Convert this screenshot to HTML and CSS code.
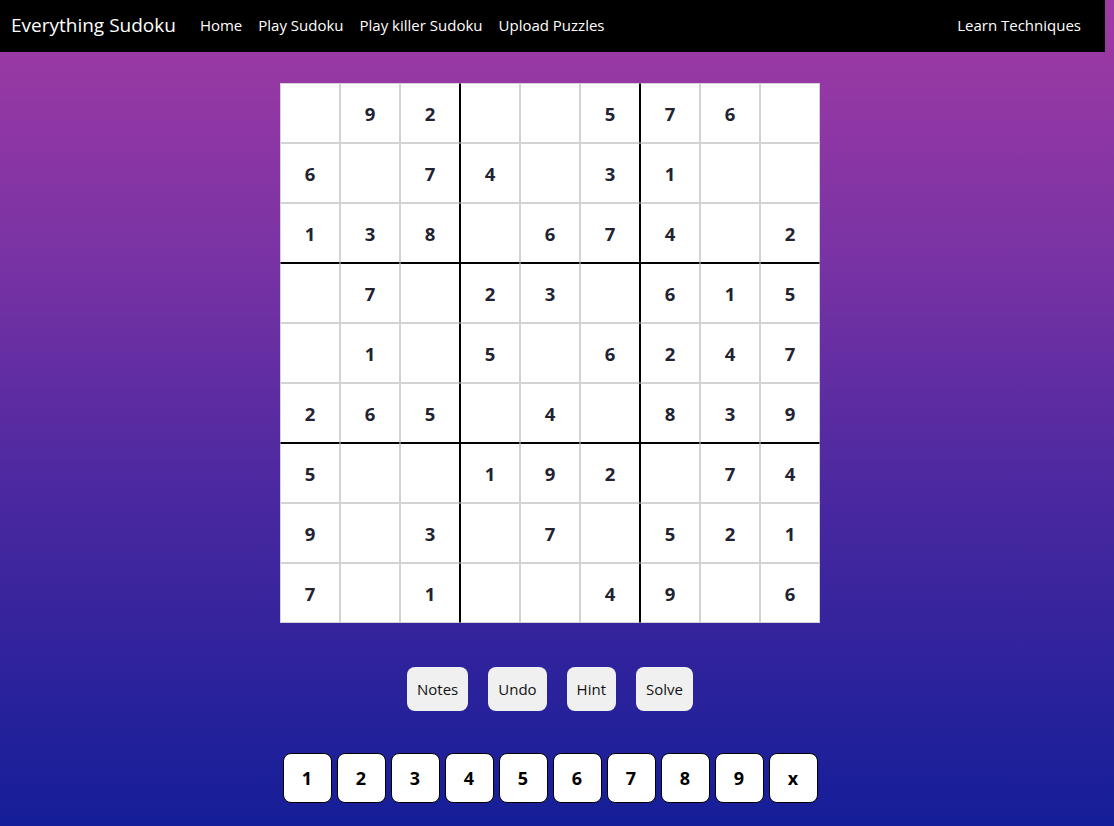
FILE: index.html
```html
<!DOCTYPE html>
<html>
<head>
<meta charset="utf-8">
<title>Everything Sudoku</title>
<link rel="stylesheet" href="styles.css">
</head>
<body>
<nav class="navbar">
  <a class="brand" href="#">Everything Sudoku</a>
  <ul class="nav-links">
    <li><a href="#">Home</a></li>
    <li><a href="#">Play Sudoku</a></li>
    <li><a href="#">Play killer Sudoku</a></li>
    <li><a href="#">Upload Puzzles</a></li>
  </ul>
  <a class="nav-right" href="#">Learn Techniques</a>
</nav>
<main class="main">
  <div class="board" id="board"></div>
  <div class="controls">
    <button class="ctrl">Notes</button>
    <button class="ctrl">Undo</button>
    <button class="ctrl">Hint</button>
    <button class="ctrl">Solve</button>
  </div>
  <div class="numpad">
    <button class="num">1</button>
    <button class="num">2</button>
    <button class="num">3</button>
    <button class="num">4</button>
    <button class="num">5</button>
    <button class="num">6</button>
    <button class="num">7</button>
    <button class="num">8</button>
    <button class="num">9</button>
    <button class="num">x</button>
  </div>
</main>
<script>
const rows = [
  " 92  576 ",
  "6 74 31  ",
  "138 674 2",
  " 7 23 615",
  " 1 5 6247",
  "265 4 839",
  "5  192 74",
  "9 3 7 521",
  "7 1  49 6"
];
const board = document.getElementById('board');
rows.forEach((row, r) => {
  for (let c = 0; c < 9; c++) {
    const d = document.createElement('div');
    d.className = 'cell';
    if (c === 2 || c === 5) d.classList.add('br');
    if (c === 3 || c === 6) d.classList.add('bl');
    if (r === 2 || r === 5) d.classList.add('bb');
    if (r === 3 || r === 6) d.classList.add('bt');
    const ch = row[c];
    d.textContent = ch === ' ' ? '' : ch;
    board.appendChild(d);
  }
});
</script>
</body>
</html>
```
FILE: styles.css
```css
* { box-sizing: border-box; }
html, body {
  margin: 0;
  padding: 0;
}
body {
  min-height: 826px;
  background: linear-gradient(to bottom, #a13aa4 0%, #7b33a4 30%, #4a28a0 60%, #141e98 100%);
  font-family: "Open Sans", "Noto Sans", sans-serif;
  overflow: hidden;
}
.navbar {
  width: 1105px;
  height: 52px;
  background: #000;
  display: flex;
  align-items: center;
  padding: 0 24px 3px 11px;
}
.navbar a {
  color: #fff;
  text-decoration: none;
}
.brand {
  font-size: 19px;
  margin-right: 24px;
}
.nav-links {
  list-style: none;
  display: flex;
  gap: 16px;
  margin: 0;
  padding: 0;
  font-size: 15px;
}
.nav-right {
  margin-left: auto;
  font-size: 15px;
}
.main {
  width: 1100px;
  display: flex;
  flex-direction: column;
  align-items: center;
  padding-top: 31px;
}
.board {
  display: grid;
  grid-template-columns: repeat(9, 60px);
  grid-template-rows: repeat(9, 60px);
  background: #fff;
}
.cell {
  border: 1px solid #d3d3d3;
  background: #fff;
  display: flex;
  align-items: center;
  justify-content: center;
  font-weight: 700;
  font-size: 18.5px;
  color: #222230;
}
.cell.br { border-right-color: #000; }
.cell.bl { border-left-color: #000; }
.cell.bb { border-bottom-color: #000; }
.cell.bt { border-top-color: #000; }
.controls {
  display: flex;
  gap: 20px;
  margin-top: 44px;
}
.ctrl {
  height: 44px;
  padding: 0 10px;
  border: none;
  border-radius: 8px;
  background: #f0f0f0;
  font-family: "Open Sans", "Noto Sans", sans-serif;
  font-size: 15px;
  color: #111;
}
.numpad {
  display: flex;
  gap: 5px;
  margin-top: 42px;
}
.num {
  width: 49px;
  height: 50px;
  border: 1px solid #000;
  border-radius: 8px;
  background: #fff;
  font-family: "Open Sans", "Noto Sans", sans-serif;
  font-size: 18px;
  font-weight: 700;
  color: #000;
  padding: 0;
}
```
